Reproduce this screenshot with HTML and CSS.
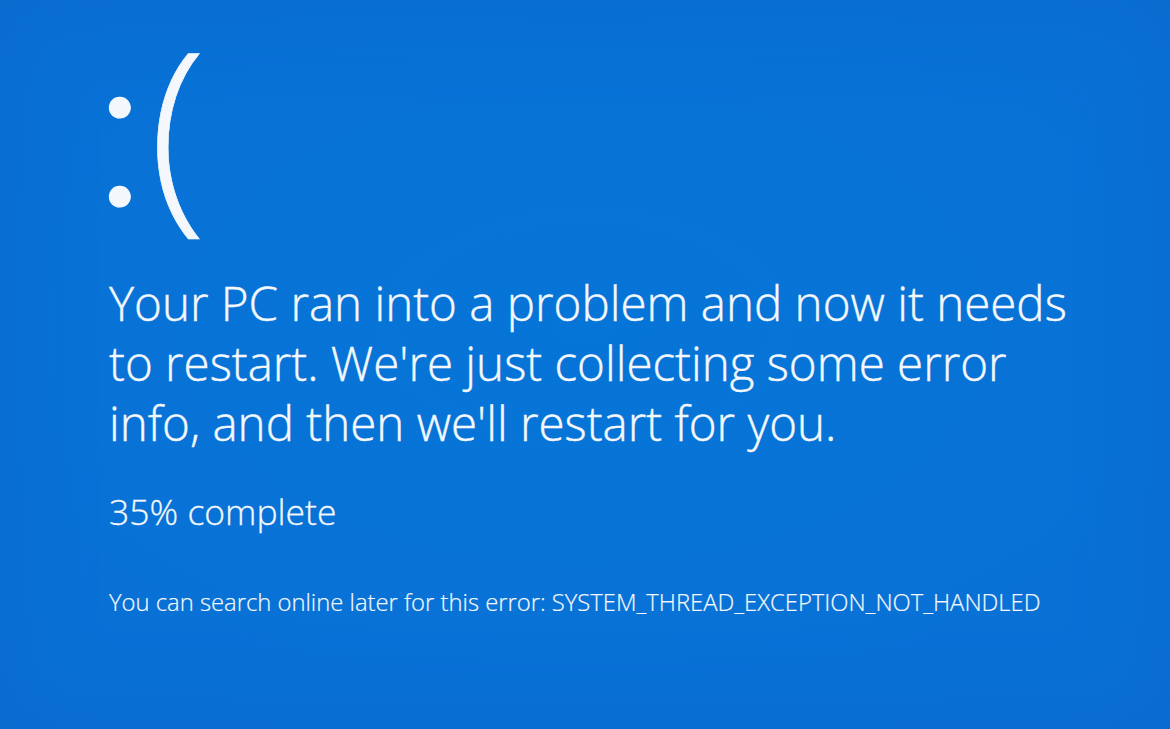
FILE: index.html
```html
<!DOCTYPE html>
<html lang="en">
<head>
<meta charset="utf-8">
<title>Your PC ran into a problem</title>
<link rel="stylesheet" href="styles.css">
</head>
<body>
<main class="screen">
  <div class="face"><span class="colon">:</span><span class="paren">(</span></div>
  <p class="message">Your PC ran into a problem and now it needs<br>to restart. We're just collecting some error<br>info, and then we'll restart for you.</p>
  <p class="progress">35% complete</p>
  <p class="code">You can search online later for this error: SYSTEM_THREAD_EXCEPTION_NOT_HANDLED</p>
</main>
</body>
</html>
```

FILE: styles.css
```css
html, body {
  margin: 0;
  padding: 0;
}
body {
  width: 1170px;
  height: 729px;
  overflow: hidden;
  background: #0a6fd3;
}
.screen {
  box-sizing: border-box;
  width: 1170px;
  height: 729px;
  padding: 6px 0 0 100px;
  color: #f4f8fd;
  font-family: "Open Sans", "Noto Sans", sans-serif;
  font-weight: 300;
  background:
    radial-gradient(ellipse 75% 70% at 50% 45%, rgba(2, 122, 218, 0.5), rgba(2, 122, 218, 0) 100%),
    #0a70d5;
  box-shadow: inset 0 0 80px 10px rgba(12, 96, 196, 0.35);
}
.face {
  box-sizing: border-box;
  display: flex;
  align-items: baseline;
  height: 240px;
  margin: 0 0 0 -7px;
  white-space: nowrap;
}
.colon {
  font-family: "Lato", "Open Sans", sans-serif;
  font-size: 224px;
  font-weight: 300;
  line-height: 1;
  -webkit-text-stroke: 1.2px #f4f8fd;
}
.paren {
  font-family: "Open Sans", "Noto Sans", sans-serif;
  font-size: 212px;
  font-weight: 300;
  line-height: 1.1;
  margin-left: 2px;
  -webkit-text-stroke: 0.6px #f4f8fd;
}
.message {
  margin: 27px 0 0 9px;
  font-size: 47.5px;
  line-height: 60px;
  -webkit-text-stroke: 0.4px #f4f8fd;
}
.progress {
  margin: 36px 0 0 9px;
  font-size: 35.5px;
  line-height: 44px;
  -webkit-text-stroke: 0.3px #f4f8fd;
}
.code {
  margin: 54px 0 0 9px;
  font-size: 23.8px;
  line-height: 30px;
  -webkit-text-stroke: 0.2px #f4f8fd;
}
```
